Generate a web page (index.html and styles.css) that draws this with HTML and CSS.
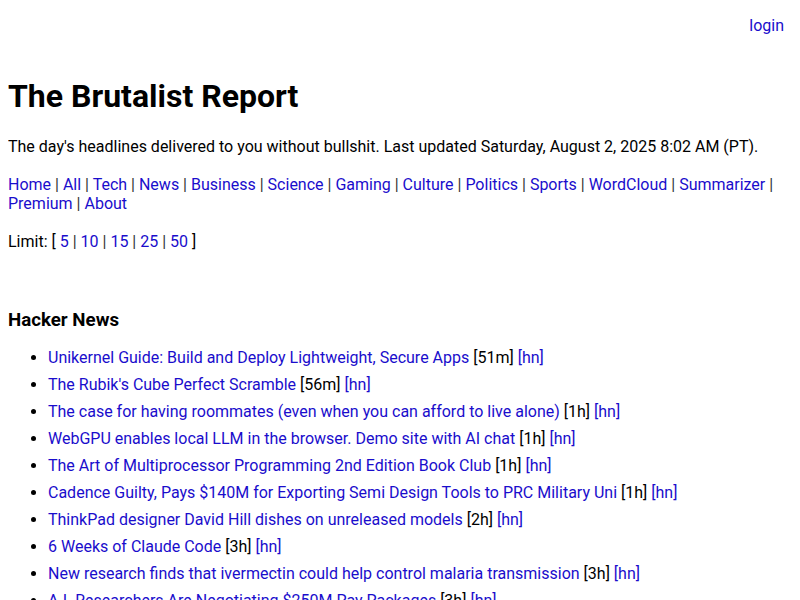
FILE: index.html
```html
<!DOCTYPE html>
<html>
<head>
<meta charset="utf-8">
<link rel="stylesheet" href="styles.css">
</head>
<body>
<div class="topbar"><a href="#">login</a></div>
<h1>The Brutalist Report</h1>
<p class="tagline">The day's headlines delivered to you without bullshit. Last updated Saturday, August 2, 2025 8:02 AM (PT).</p>
<nav class="nav">
<a href="#">Home</a> <span class="sep">|</span> <a href="#">All</a> <span class="sep">|</span> <a href="#">Tech</a> <span class="sep">|</span> <a href="#">News</a> <span class="sep">|</span> <a href="#">Business</a> <span class="sep">|</span> <a href="#">Science</a> <span class="sep">|</span> <a href="#">Gaming</a> <span class="sep">|</span> <a href="#">Culture</a> <span class="sep">|</span> <a href="#">Politics</a> <span class="sep">|</span> <a href="#">Sports</a> <span class="sep">|</span> <a href="#">WordCloud</a> <span class="sep">|</span> <a href="#">Summarizer</a> <span class="sep">|</span> <a href="#">Premium</a> <span class="sep">|</span> <a href="#">About</a>
</nav>
<p class="limit">Limit: [ <a href="#">5</a> <span class="sep">|</span> <a href="#">10</a> <span class="sep">|</span> <a href="#">15</a> <span class="sep">|</span> <a href="#">25</a> <span class="sep">|</span> <a href="#">50</a> ]</p>
<section class="source">
<h2>Hacker News</h2>
<ul class="stories">
<li><a href="#">Unikernel Guide: Build and Deploy Lightweight, Secure Apps</a> [51m] <a href="#">[hn]</a></li>
<li><a href="#">The Rubik's Cube Perfect Scramble</a> [56m] <a href="#">[hn]</a></li>
<li><a href="#">The case for having roommates (even when you can afford to live alone)</a> [1h] <a href="#">[hn]</a></li>
<li><a href="#">WebGPU enables local LLM in the browser. Demo site with AI chat</a> [1h] <a href="#">[hn]</a></li>
<li><a href="#">The Art of Multiprocessor Programming 2nd Edition Book Club</a> [1h] <a href="#">[hn]</a></li>
<li><a href="#">Cadence Guilty, Pays $140M for Exporting Semi Design Tools to PRC Military Uni</a> [1h] <a href="#">[hn]</a></li>
<li><a href="#">ThinkPad designer David Hill dishes on unreleased models</a> [2h] <a href="#">[hn]</a></li>
<li><a href="#">6 Weeks of Claude Code</a> [3h] <a href="#">[hn]</a></li>
<li><a href="#">New research finds that ivermectin could help control malaria transmission</a> [3h] <a href="#">[hn]</a></li>
<li><a href="#">A.I. Researchers Are Negotiating $250M Pay Packages</a> [3h] <a href="#">[hn]</a></li>
</ul>
</section>
</body>
</html>
```
FILE: styles.css
```css
body {
  margin: 8px;
  font-family: Roboto, "Liberation Sans", sans-serif;
  font-size: 16px;
  color: #000;
  background: #fff;
}
a {
  color: #1a0dcc;
  text-decoration: none;
}
.topbar {
  text-align: right;
  padding: 8px 8px 0 0;
}
h1 {
  font-size: 32px;
  font-weight: 700;
  margin: 42px 0 22px;
}
.tagline {
  margin: 0 0 19px;
}
.nav {
  margin: 0 0 19px;
}
.sep {
  color: #333;
}
.limit {
  margin: 0 0 58px;
}
h2 {
  font-size: 18.72px;
  font-weight: 700;
  margin: 0 0 13px;
}
.stories {
  margin: 0;
  padding-left: 40px;
}
.stories li {
  line-height: 27px;
}
```
